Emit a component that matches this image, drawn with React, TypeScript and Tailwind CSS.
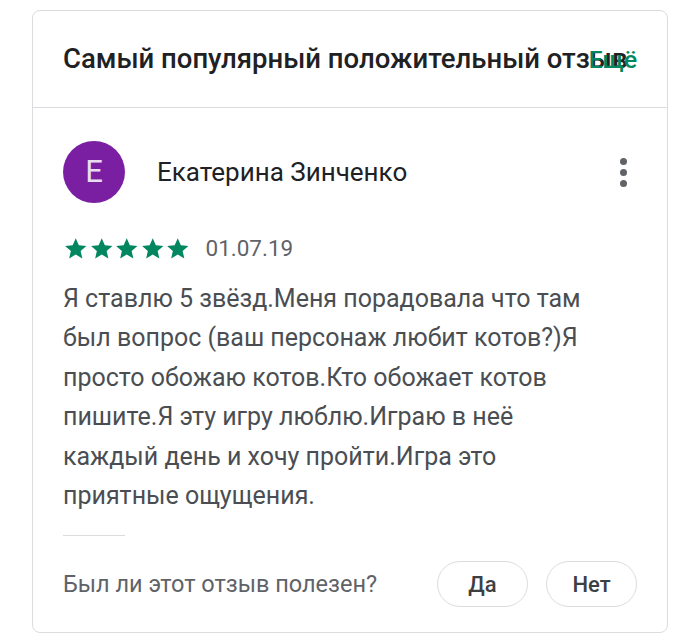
import { ReactNode } from "react";

function Star() {
  return (
    <svg viewBox="0 0 24 24" className="w-[25.5px] h-[25.5px] fill-[#01875f]">
      <path d="M12 2.2l2.9 6.6 7.1.6-5.4 4.7 1.6 7-6.2-3.7-6.2 3.7 1.6-7L2 9.4l7.1-.6z" />
    </svg>
  );
}

function Pill(props: { children: ReactNode }) {
  return (
    <button className="h-[46px] w-[91px] rounded-full border border-[#dadce0] text-[22px] font-medium text-[#3c4043] bg-white">
      {props.children}
    </button>
  );
}

export default function App() {
  return (
    <div className="w-[700px] h-[644px] bg-white pt-[10px] pl-[32px] font-['Roboto',sans-serif]">
      <div className="w-[636px] h-[623px] border border-[#dadce0] rounded-[8px] overflow-hidden">
        <div className="relative h-[97px] border-b border-[#dadce0] flex items-center pl-[30px]">
          <span className="text-[27.5px] font-medium text-[#202124] whitespace-nowrap">
            Самый популярный положительный отзыв
          </span>
          <span className="absolute right-[30px] top-[31px] text-[24.5px] font-medium text-[#01875f]">
            Ещё
          </span>
        </div>

        <div className="pl-[30px] pr-[30px]">
          <div className="flex items-center mt-[33px] h-[62px]">
            <div className="w-[62px] h-[62px] rounded-full bg-[#7b1fa2] flex items-center justify-center text-[31px] text-[#eadcf0]">
              E
            </div>
            <span className="ml-[32px] text-[26px] text-[#202124]">Екатерина Зинченко</span>
            <div className="ml-auto mr-[10px] flex flex-col gap-[4px]">
              <span className="w-[7px] h-[7px] rounded-full bg-[#5f6368]" />
              <span className="w-[7px] h-[7px] rounded-full bg-[#5f6368]" />
              <span className="w-[7px] h-[7px] rounded-full bg-[#5f6368]" />
            </div>
          </div>

          <div className="flex items-center mt-[33px] h-[26px]">
            <div className="flex">
              <Star />
              <Star />
              <Star />
              <Star />
              <Star />
            </div>
            <span className="ml-[15px] text-[22.5px] text-[#5f6368]">01.07.19</span>
          </div>

          <p className="mt-[17px] w-[530px] text-[25px] leading-[39.4px] text-[#4a4e52]">
            Я ставлю 5 звёзд.Меня порадовала что там был вопрос (ваш персонаж любит котов?)Я просто обожаю котов.Кто обожает котов пишите.Я эту игру люблю.Играю в неё каждый день и хочу пройти.Игра это приятные ощущения.
          </p>

          <div className="mt-[20px] w-[62px] h-px bg-[#dadce0]" />

          <div className="flex items-center mt-[25px]">
            <span className="text-[23.5px] text-[#5f6368]">Был ли этот отзыв полезен?</span>
            <div className="ml-auto flex gap-[18px]">
              <Pill>Да</Pill>
              <Pill>Нет</Pill>
            </div>
          </div>
        </div>
      </div>
    </div>
  );
}
